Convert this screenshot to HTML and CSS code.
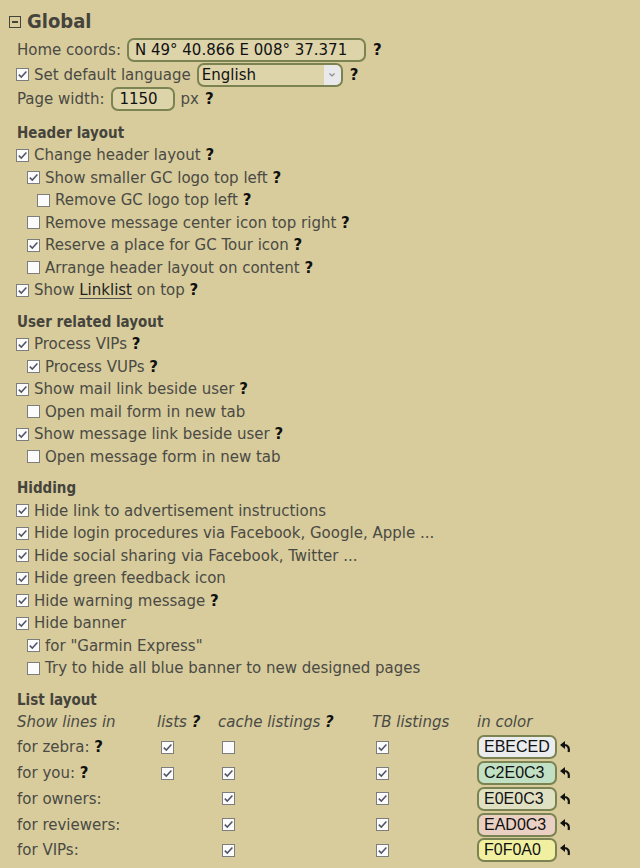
FILE: index.html
```html
<!DOCTYPE html>
<html>
<head>
<meta charset="utf-8">
<link rel="stylesheet" href="styles.css">
</head>
<body>
<div class="page">
  <div class="global"><span class="minus"></span>Global</div>

  <div class="frow l0">
    <span class="lbl">Home coords:</span>
    <span class="input coords">N 49° 40.866 E 008° 37.371</span>
    <b class="q gapq">?</b>
  </div>
  <div class="frow">
    <span class="cb on"><svg viewBox="0 0 11 11"><polyline points="1.8,5.6 4.3,8.1 9.4,2.6"/></svg></span>
    <span>Set default language</span>
    <span class="select"><span class="seltext">English</span><span class="arrow"><svg viewBox="0 0 8 6"><polyline points="1.5,1.5 4,4 6.5,1.5"/></svg></span></span>
    <b class="q gapq2">?</b>
  </div>
  <div class="frow l0">
    <span class="lbl">Page width:</span>
    <span class="input pw">1150</span>
    <span class="px">px</span>
    <b class="q">?</b>
  </div>

  <h2 class="sec first">Header layout</h2>
  <div class="row"><span class="cb on"><svg viewBox="0 0 11 11"><polyline points="1.8,5.6 4.3,8.1 9.4,2.6"/></svg></span>Change header layout&nbsp;<b class="q">?</b></div>
  <div class="row l1"><span class="cb on"><svg viewBox="0 0 11 11"><polyline points="1.8,5.6 4.3,8.1 9.4,2.6"/></svg></span>Show smaller GC logo top left&nbsp;<b class="q">?</b></div>
  <div class="row l2"><span class="cb"></span>Remove GC logo top left&nbsp;<b class="q">?</b></div>
  <div class="row l1"><span class="cb"></span>Remove message center icon top right&nbsp;<b class="q">?</b></div>
  <div class="row l1"><span class="cb on"><svg viewBox="0 0 11 11"><polyline points="1.8,5.6 4.3,8.1 9.4,2.6"/></svg></span>Reserve a place for GC Tour icon&nbsp;<b class="q">?</b></div>
  <div class="row l1"><span class="cb"></span>Arrange header layout on content&nbsp;<b class="q">?</b></div>
  <div class="row"><span class="cb on"><svg viewBox="0 0 11 11"><polyline points="1.8,5.6 4.3,8.1 9.4,2.6"/></svg></span>Show&nbsp;<span class="link">Linklist</span>&nbsp;on top&nbsp;<b class="q">?</b></div>

  <h2 class="sec">User related layout</h2>
  <div class="row"><span class="cb on"><svg viewBox="0 0 11 11"><polyline points="1.8,5.6 4.3,8.1 9.4,2.6"/></svg></span>Process VIPs&nbsp;<b class="q">?</b></div>
  <div class="row l1"><span class="cb on"><svg viewBox="0 0 11 11"><polyline points="1.8,5.6 4.3,8.1 9.4,2.6"/></svg></span>Process VUPs&nbsp;<b class="q">?</b></div>
  <div class="row"><span class="cb on"><svg viewBox="0 0 11 11"><polyline points="1.8,5.6 4.3,8.1 9.4,2.6"/></svg></span>Show mail link beside user&nbsp;<b class="q">?</b></div>
  <div class="row l1"><span class="cb"></span>Open mail form in new tab</div>
  <div class="row"><span class="cb on"><svg viewBox="0 0 11 11"><polyline points="1.8,5.6 4.3,8.1 9.4,2.6"/></svg></span>Show message link beside user&nbsp;<b class="q">?</b></div>
  <div class="row l1"><span class="cb"></span>Open message form in new tab</div>

  <h2 class="sec">Hidding</h2>
  <div class="row"><span class="cb on"><svg viewBox="0 0 11 11"><polyline points="1.8,5.6 4.3,8.1 9.4,2.6"/></svg></span>Hide link to advertisement instructions</div>
  <div class="row"><span class="cb on"><svg viewBox="0 0 11 11"><polyline points="1.8,5.6 4.3,8.1 9.4,2.6"/></svg></span>Hide login procedures via Facebook, Google, Apple ...</div>
  <div class="row"><span class="cb on"><svg viewBox="0 0 11 11"><polyline points="1.8,5.6 4.3,8.1 9.4,2.6"/></svg></span>Hide social sharing via Facebook, Twitter ...</div>
  <div class="row"><span class="cb on"><svg viewBox="0 0 11 11"><polyline points="1.8,5.6 4.3,8.1 9.4,2.6"/></svg></span>Hide green feedback icon</div>
  <div class="row"><span class="cb on"><svg viewBox="0 0 11 11"><polyline points="1.8,5.6 4.3,8.1 9.4,2.6"/></svg></span>Hide warning message&nbsp;<b class="q">?</b></div>
  <div class="row"><span class="cb on"><svg viewBox="0 0 11 11"><polyline points="1.8,5.6 4.3,8.1 9.4,2.6"/></svg></span>Hide banner</div>
  <div class="row l1"><span class="cb on"><svg viewBox="0 0 11 11"><polyline points="1.8,5.6 4.3,8.1 9.4,2.6"/></svg></span>for "Garmin Express"</div>
  <div class="row l1"><span class="cb"></span>Try to hide all blue banner to new designed pages</div>

  <h2 class="sec">List layout</h2>
  <div class="grid">
    <div class="hd">Show lines in</div>
    <div class="hd">lists <b class="q">?</b></div>
    <div class="hd">cache listings <b class="q">?</b></div>
    <div class="hd">TB listings</div>
    <div class="hd">in color</div>

    <div class="cell">for zebra:&nbsp;<b class="q">?</b></div>
    <div class="cell"><span class="cb on"><svg viewBox="0 0 11 11"><polyline points="1.8,5.6 4.3,8.1 9.4,2.6"/></svg></span></div>
    <div class="cell"><span class="cb"></span></div>
    <div class="cell"><span class="cb on"><svg viewBox="0 0 11 11"><polyline points="1.8,5.6 4.3,8.1 9.4,2.6"/></svg></span></div>
    <div class="cell"><span class="color c1">EBECED</span><svg class="undo" viewBox="0 0 10 12"><path class="head" d="M0 4 L5 0 L5 8 Z"/><path class="tail" d="M4 4 C8 4 9.5 6.5 8.6 11"/></svg></div>

    <div class="cell">for you:&nbsp;<b class="q">?</b></div>
    <div class="cell"><span class="cb on"><svg viewBox="0 0 11 11"><polyline points="1.8,5.6 4.3,8.1 9.4,2.6"/></svg></span></div>
    <div class="cell"><span class="cb on"><svg viewBox="0 0 11 11"><polyline points="1.8,5.6 4.3,8.1 9.4,2.6"/></svg></span></div>
    <div class="cell"><span class="cb on"><svg viewBox="0 0 11 11"><polyline points="1.8,5.6 4.3,8.1 9.4,2.6"/></svg></span></div>
    <div class="cell"><span class="color c2">C2E0C3</span><svg class="undo" viewBox="0 0 10 12"><path class="head" d="M0 4 L5 0 L5 8 Z"/><path class="tail" d="M4 4 C8 4 9.5 6.5 8.6 11"/></svg></div>

    <div class="cell">for owners:</div>
    <div class="cell"></div>
    <div class="cell"><span class="cb on"><svg viewBox="0 0 11 11"><polyline points="1.8,5.6 4.3,8.1 9.4,2.6"/></svg></span></div>
    <div class="cell"><span class="cb on"><svg viewBox="0 0 11 11"><polyline points="1.8,5.6 4.3,8.1 9.4,2.6"/></svg></span></div>
    <div class="cell"><span class="color c3">E0E0C3</span><svg class="undo" viewBox="0 0 10 12"><path class="head" d="M0 4 L5 0 L5 8 Z"/><path class="tail" d="M4 4 C8 4 9.5 6.5 8.6 11"/></svg></div>

    <div class="cell">for reviewers:</div>
    <div class="cell"></div>
    <div class="cell"><span class="cb on"><svg viewBox="0 0 11 11"><polyline points="1.8,5.6 4.3,8.1 9.4,2.6"/></svg></span></div>
    <div class="cell"><span class="cb on"><svg viewBox="0 0 11 11"><polyline points="1.8,5.6 4.3,8.1 9.4,2.6"/></svg></span></div>
    <div class="cell"><span class="color c4">EAD0C3</span><svg class="undo" viewBox="0 0 10 12"><path class="head" d="M0 4 L5 0 L5 8 Z"/><path class="tail" d="M4 4 C8 4 9.5 6.5 8.6 11"/></svg></div>

    <div class="cell">for VIPs:</div>
    <div class="cell"></div>
    <div class="cell"><span class="cb on"><svg viewBox="0 0 11 11"><polyline points="1.8,5.6 4.3,8.1 9.4,2.6"/></svg></span></div>
    <div class="cell"><span class="cb on"><svg viewBox="0 0 11 11"><polyline points="1.8,5.6 4.3,8.1 9.4,2.6"/></svg></span></div>
    <div class="cell"><span class="color c5">F0F0A0</span><svg class="undo" viewBox="0 0 10 12"><path class="head" d="M0 4 L5 0 L5 8 Z"/><path class="tail" d="M4 4 C8 4 9.5 6.5 8.6 11"/></svg></div>
  </div>
</div>
</body>
</html>
```

FILE: styles.css
```css
html, body {
  margin: 0;
  padding: 0;
  background: #d8cc9c;
}
body {
  font-family: "DejaVu Sans", Verdana, sans-serif;
  font-size: 15px;
  color: #4a4a44;
}
.page {
  padding-left: 16px;
  height: 868px;
  overflow: hidden;
}
.global {
  display: flex;
  align-items: center;
  margin: 6px 0 0 -7px;
  height: 30px;
  font-family: "DejaVu Sans Condensed", "DejaVu Sans", sans-serif;
  font-weight: bold;
  font-size: 20px;
  color: #45443c;
}
.minus {
  box-sizing: border-box;
  width: 12px;
  height: 12px;
  border: 1px solid #45443c;
  margin-right: 6px;
  margin-top: 2px;
  display: flex;
  align-items: center;
  justify-content: center;
}
.minus::after {
  content: "";
  width: 6px;
  height: 1.5px;
  background: #45443c;
}
.frow {
  display: flex;
  align-items: center;
  height: 24.5px;
  white-space: nowrap;
}
.global + .frow {
  margin-top: 2px;
}
.l0 {
  padding-left: 1px;
}
.input {
  box-sizing: border-box;
  display: inline-flex;
  align-items: center;
  height: 24px;
  border: 2px solid #7c8352;
  border-radius: 7px;
  background: #ddd4aa;
  color: #111;
  padding-left: 6px;
}
.coords {
  width: 239px;
  margin-left: 6px;
}
.pw {
  width: 64px;
  margin-left: 7px;
}
.px {
  margin-left: 5px;
  margin-right: 6px;
}
.q {
  color: #111;
  font-weight: bold;
}
.gapq {
  margin-left: 7px;
}
.gapq2 {
  margin-left: 7px;
}
.select {
  box-sizing: border-box;
  display: inline-flex;
  align-items: center;
  justify-content: space-between;
  width: 146px;
  height: 24px;
  margin-left: 6px;
  border: 2px solid #7c8352;
  border-radius: 7px;
  background: #ddd4aa;
  color: #111;
  padding-left: 3px;
  overflow: hidden;
}
.arrow {
  width: 17px;
  height: 20px;
  background: #e9e8ea;
  border-radius: 0 5px 5px 0;
  display: flex;
  align-items: center;
  justify-content: center;
}
.arrow svg {
  width: 8px;
  height: 6px;
  fill: none;
  stroke: #8a8a90;
  stroke-width: 1.2;
}
.sec {
  margin: 9px 0 0 1px;
  height: 22.5px;
  line-height: 22.5px;
  font-family: "DejaVu Sans Condensed", "DejaVu Sans", sans-serif;
  font-weight: bold;
  font-size: 15px;
  color: #45443c;
}
.sec.first {
  margin-top: 10px;
}
.row {
  display: flex;
  align-items: center;
  height: 22.5px;
  white-space: nowrap;
}
.row.l1 {
  padding-left: 11px;
}
.row.l2 {
  padding-left: 21px;
}
.cb {
  box-sizing: border-box;
  flex: none;
  width: 13px;
  height: 13px;
  border: 1px solid #7d7d7d;
  background: #fbfbfb;
  margin-right: 5px;
  display: inline-block;
}
.cb svg {
  display: block;
  width: 11px;
  height: 11px;
  fill: none;
  stroke: #4f5566;
  stroke-width: 1.5;
}
.link {
  color: #222;
  text-decoration: underline;
  text-underline-offset: 3px;
  text-decoration-color: #555;
}
.grid {
  display: grid;
  grid-template-columns: 140px 61px 154px 105px auto;
  margin-left: 1px;
}
.hd {
  height: 23.5px;
  line-height: 23.5px;
  font-style: italic;
  white-space: nowrap;
}
.cell {
  display: flex;
  align-items: center;
  height: 25.75px;
  white-space: nowrap;
}
.cell .cb {
  margin-left: 4px;
}
.color {
  box-sizing: border-box;
  display: inline-flex;
  align-items: center;
  width: 80px;
  height: 24px;
  border: 2px solid #7c8352;
  border-radius: 7px;
  padding-left: 5px;
  font-family: "Liberation Sans", Arial, sans-serif;
  font-size: 16px;
  color: #111;
}
.c1 { background: #ebeced; }
.c2 { background: #c2e0c3; }
.c3 { background: #e0e0c3; }
.c4 { background: #ead0c3; }
.c5 { background: #f0f0a0; }
.undo {
  width: 10px;
  height: 12px;
  margin-left: 3px;
}
.undo .head {
  fill: #111;
}
.undo .tail {
  fill: none;
  stroke: #111;
  stroke-width: 2.2;
}
```
